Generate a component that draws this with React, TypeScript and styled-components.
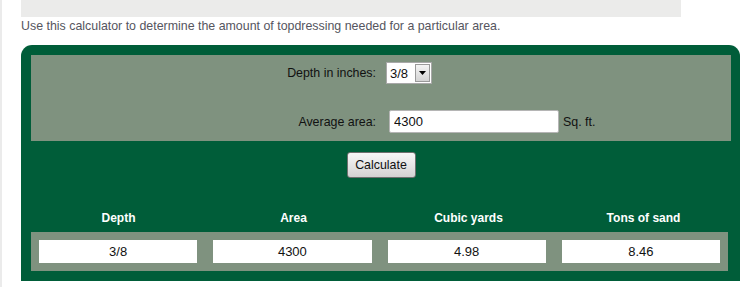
import React from 'react';
import styled, { createGlobalStyle } from 'styled-components';

const Global = createGlobalStyle`
    body {
        margin: 0;
        padding: 0;
        background: #ffffff;
        font-family: "Liberation Sans", Arial, sans-serif;
        font-size: 12.4px;
    }
`;

const Page = styled.div`
    height: 100vh;
    box-sizing: border-box;
    border-left: 2px solid #ebebeb;
    padding-left: 19px;
    overflow: hidden;
`;

const TopBar = styled.div`
    width: 660px;
    height: 17px;
    background: #ebebea;
`;

const Intro = styled.p`
    margin: 2px 0 0;
    line-height: 15px;
    color: #555560;
`;

const Panel = styled.div`
    margin-top: 11px;
    width: 719px;
    box-sizing: border-box;
    padding: 10px 9px 10px 10px;
    background: #005d39;
    border-radius: 11px 11px 0 0;
`;

const FormBox = styled.div`
    background: #7f927f;
    display: grid;
    grid-template-columns: 1fr 1fr;
    column-gap: 10px;
    row-gap: 26px;
    padding: 7px 0 8px;
    align-items: center;
`;

const Label = styled.label`
    text-align: right;
    color: #111111;
`;

const Field = styled.div`
    display: flex;
    align-items: center;
    gap: 4px;
    color: #111111;
`;

const SelectBox = styled.div`
    width: 46px;
    height: 22px;
    box-sizing: border-box;
    border: 1px solid #a8a8a8;
    background: #ffffff;
    display: flex;
    align-items: center;
    justify-content: space-between;
    padding: 0 1px 0 3px;
    font-size: 13px;
`;

const DropButton = styled.span`
    width: 15px;
    height: 18px;
    box-sizing: border-box;
    border: 1px solid #9a9a9a;
    background: linear-gradient(#f4f4f4, #d4d4d4);
    display: flex;
    align-items: center;
    justify-content: center;
`;

const TextInput = styled.input`
    width: 170px;
    height: 23px;
    box-sizing: border-box;
    margin: 0 0 0 3px;
    border: 1px solid #b5b5b5;
    border-radius: 2px;
    padding: 0 4px;
    font-family: "Liberation Sans", Arial, sans-serif;
    font-size: 13px;
    color: #111111;
    background: #ffffff;
    outline: none;
`;

const ButtonRow = styled.div`
    display: flex;
    justify-content: center;
    padding: 11px 0 0;
`;

const Button = styled.button`
    width: 69px;
    height: 26px;
    border: 1px solid #707070;
    border-radius: 3px;
    background: linear-gradient(#f7f7f7, #e6e6e6 50%, #d2d2d2);
    font-family: "Liberation Sans", Arial, sans-serif;
    font-size: 12.4px;
    color: #111111;
    padding: 0;
    cursor: pointer;
`;

const Results = styled.div`
    display: grid;
    grid-template-columns: repeat(4, 1fr);
    column-gap: 16px;
    padding: 0 8px;
`;

const HeaderRow = styled(Results)`
    margin-top: 33px;
    padding-bottom: 6px;
`;

const Head = styled.div`
    text-align: center;
    color: #ffffff;
    font-weight: bold;
    font-size: 12px;
    line-height: 15px;
`;

const Band = styled(Results)`
    background: #7f927f;
    padding-top: 8px;
    padding-bottom: 8px;
    margin-right: 3px;
`;

const Cell = styled.div`
    background: #ffffff;
    height: 23px;
    display: flex;
    align-items: center;
    justify-content: center;
    color: #111111;
    font-size: 13px;
`;

const results = [
    { head: 'Depth', value: '3/8' },
    { head: 'Area', value: '4300' },
    { head: 'Cubic yards', value: '4.98' },
    { head: 'Tons of sand', value: '8.46' },
];

export default function App() {
    return (
        <Page>
            <Global />
            <TopBar />
            <Intro>Use this calculator to determine the amount of topdressing needed for a particular area.</Intro>
            <Panel>
                <FormBox>
                    <Label>Depth in inches:</Label>
                    <Field>
                        <SelectBox>
                            <span>3/8</span>
                            <DropButton>
                                <svg width="7" height="4" viewBox="0 0 7 4">
                                    <path d="M0 0h7L3.5 4z" fill="#000" />
                                </svg>
                            </DropButton>
                        </SelectBox>
                    </Field>
                    <Label>Average area:</Label>
                    <Field>
                        <TextInput defaultValue="4300" />
                        <span>Sq. ft.</span>
                    </Field>
                </FormBox>
                <ButtonRow>
                    <Button>Calculate</Button>
                </ButtonRow>
                <HeaderRow>
                    {results.map((r) => (
                        <Head key={r.head}>{r.head}</Head>
                    ))}
                </HeaderRow>
                <Band>
                    {results.map((r) => (
                        <Cell key={r.head}>{r.value}</Cell>
                    ))}
                </Band>
            </Panel>
        </Page>
    );
}
